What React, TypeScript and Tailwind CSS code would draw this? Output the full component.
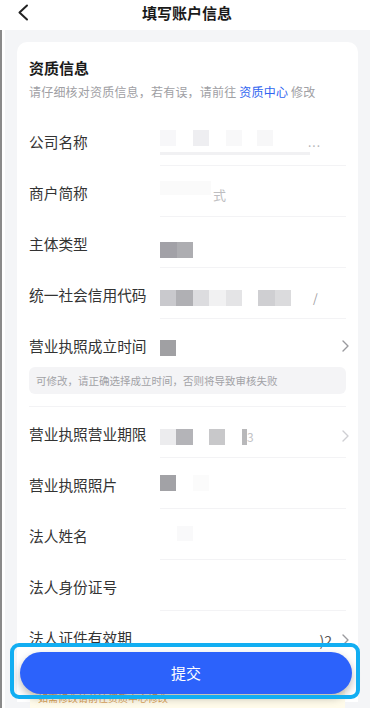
import React from "react";

const font = { fontFamily: '"Noto Sans CJK SC", "Noto Sans", sans-serif' };

function Chevron({ light = false }: { light?: boolean }) {
  return (
    <svg width="7" height="12" viewBox="0 0 7 12" className="shrink-0 -mr-[3px]">
      <polyline
        points="1,1 6,6 1,11"
        fill="none"
        stroke={light ? "#cfcfd3" : "#9a9a9e"}
        strokeWidth="1.4"
        strokeLinecap="round"
        strokeLinejoin="round"
      />
    </svg>
  );
}

function Row({ label, children, right }: { label: string; children?: React.ReactNode; right?: React.ReactNode }) {
  return (
    <div className="flex h-[51px]">
      <div className="w-[131px] shrink-0 pt-[3px] flex items-center text-[14.7px] text-[#333] whitespace-nowrap">
        {label}
      </div>
      <div className="flex-1 flex items-center border-b border-[#f3f3f5] pt-[8px]">
        <div className="flex-1 flex items-center">{children}</div>
        {right}
      </div>
    </div>
  );
}

export default function App() {
  return (
    <div className="relative h-[717px] w-[370px] overflow-hidden bg-white" style={font}>
      {/* Header */}
      <div className="relative h-[30px] flex items-center justify-center">
        <svg width="12" height="17" viewBox="0 0 12 17" className="absolute left-[17px] top-[4px]">
          <polyline points="10,1.5 2.5,8.5 10,15.5" fill="none" stroke="#222" strokeWidth="2" strokeLinecap="round" strokeLinejoin="round" />
        </svg>
        <span className="text-[15px] font-bold text-[#1a1a1a] -mt-[4px] ml-[4px]">填写账户信息</span>
      </div>

      {/* Body */}
      <div className="flex h-[678px]">
        <div className="w-[5px] shrink-0 bg-white flex">
          <div className="w-[1.5px] bg-[#8a8a8a]" />
        </div>
        <div className="flex-1 bg-[#f4f5f7] pt-[12px] pl-[12px] pr-[12px]">
          <div className="bg-white rounded-t-[10px] px-[12px] pt-[15px] pb-[40px]">
            <div className="text-[15px] font-bold text-[#1a1a1a] leading-[21px]">资质信息</div>
            <div className="mt-[5px] text-[12px] leading-[17px] text-[#a0a0a4] whitespace-nowrap tracking-[0.2px]">
              请仔细核对资质信息，若有误，请前往 <span className="text-[#2f64f0]">资质中心</span> 修改
            </div>

            <div className="mt-[15px]">
              <Row label="公司名称">
                <div className="flex flex-col w-full -mt-[6px]">
                  <div className="flex items-center">
                    <div className="w-[16px] h-[16px] bg-[#f7f7f9]" />
                    <div className="w-[17px]" />
                    <div className="w-[16px] h-[16px] bg-[#eeeef1]" />
                    <div className="w-[17px]" />
                    <div className="w-[16px] h-[16px] bg-[#f8f8f9]" />
                    <div className="w-[15px]" />
                    <div className="w-[16px] h-[16px] bg-[#f7f7f8]" />
                    <span className="ml-[35px] text-[12px] text-[#b5b5b8] leading-none tracking-[1px] mt-[8px]">...</span>
                  </div>
                  <div className="mt-[4px] h-[3px] w-[150px] bg-[#f1f1f3]" />
                </div>
              </Row>
              <Row label="商户简称">
                <div className="w-[51px] h-[14px] bg-[#fafafa] -mt-[14px]" />
                <span className="text-[13px] text-[#bdbdc0] ml-[2px]">式</span>
              </Row>
              <Row label="主体类型">
                <div className="flex mt-[8px]">
                  <div className="w-[17px] h-[16px] bg-[#a2a1a7]" />
                  <div className="w-[16px] h-[16px] bg-[#adadb1]" />
                </div>
              </Row>
              <Row label="统一社会信用代码">
                <div className="flex items-center mt-[2px]">
                  <div className="w-[16px] h-[16px] bg-[#c9c9cd]" />
                  <div className="w-[17px] h-[16px] bg-[#b0b0b4]" />
                  <div className="w-[16px] h-[16px] bg-[#dcdcdf]" />
                  <div className="w-[17px] h-[16px] bg-[#f1f1f2]" />
                  <div className="w-[16px] h-[16px] bg-[#e4e4e6]" />
                  <div className="w-[16px] h-[16px]" />
                  <div className="w-[17px] h-[16px] bg-[#cfcfd2]" />
                  <div className="w-[16px] h-[16px] bg-[#dbdbdd]" />
                  <span className="ml-[22px] text-[12px] text-[#9a9a9e]">/</span>
                </div>
              </Row>

              {/* 成立时间 row with hint */}
              <div className="flex flex-col pb-[12px] border-b border-[#f3f3f5]">
                <div className="flex h-[48px] pt-[6px] items-center">
                  <div className="w-[131px] shrink-0 text-[14.7px] text-[#333] whitespace-nowrap">营业执照成立时间</div>
                  <div className="flex-1 flex items-center">
                    <div className="w-[16px] h-[16px] bg-[#a0a0a3] mt-[4px]" />
                  </div>
                  <Chevron />
                </div>
                <div className="h-[27px] rounded-[6px] bg-[#f4f4f6] flex items-center px-[7px] text-[10.5px] text-[#a2a2a6] whitespace-nowrap">
                  可修改，请正确选择成立时间，否则将导致审核失败
                </div>
              </div>

              <Row label="营业执照营业期限" right={<Chevron light />}>
                <div className="flex items-center mt-[2px]">
                  <div className="w-[16px] h-[16px] bg-[#ececee]" />
                  <div className="w-[17px] h-[16px] bg-[#b4b4b8]" />
                  <div className="w-[16px] h-[16px]" />
                  <div className="w-[16px] h-[16px] bg-[#c8c8ca]" />
                  <div className="w-[17px] h-[16px]" />
                  <div className="w-[5px] h-[16px] bg-[#b8b8ba]" />
                  <span className="text-[12px] text-[#c3c3c6] leading-none">3</span>
                </div>
              </Row>
              <Row label="营业执照照片">
                <div className="flex items-center -mt-[8px]">
                  <div className="w-[16px] h-[16px] bg-[#a2a2a6]" />
                  <div className="w-[17px]" />
                  <div className="w-[16px] h-[16px] bg-[#fbfbfb]" />
                </div>
              </Row>
              <Row label="法人姓名">
                <div className="flex items-center -mt-[10px] ml-[17px]">
                  <div className="w-[16px] h-[15px] bg-[#f9f9fa]" />
                </div>
              </Row>
              <Row label="法人身份证号" />
              <Row label="法人证件有效期" right={<Chevron />}>
                <span className="ml-auto mr-[10px] text-[14px] text-[#555]">)2</span>
              </Row>
            </div>
          </div>
        </div>
      </div>
      <div className="h-[9px] bg-white" />

      {/* Notice strip behind the button */}
      <div className="absolute left-[30px] top-[688px] w-[315px] h-[20px] bg-[#fffbea] px-[8px] pt-[5px] text-[10px] leading-none text-[#d9a35a] whitespace-nowrap overflow-hidden">
        如需修改请前往资质中心修改
      </div>

      {/* Submit button */}
      <div className="absolute left-[20px] top-[652px] w-[332px] h-[42px] rounded-full bg-[#2c62fb] shadow-[0_4px_8px_rgba(0,0,0,0.28)] flex items-center justify-center text-[15px] text-white">
        提交
      </div>
      {/* Highlight outline */}
      <div className="absolute left-[10px] top-[643px] w-[350px] h-[56px] rounded-[9px] border-[4px] border-[#12aef2] pointer-events-none" />
    </div>
  );
}
